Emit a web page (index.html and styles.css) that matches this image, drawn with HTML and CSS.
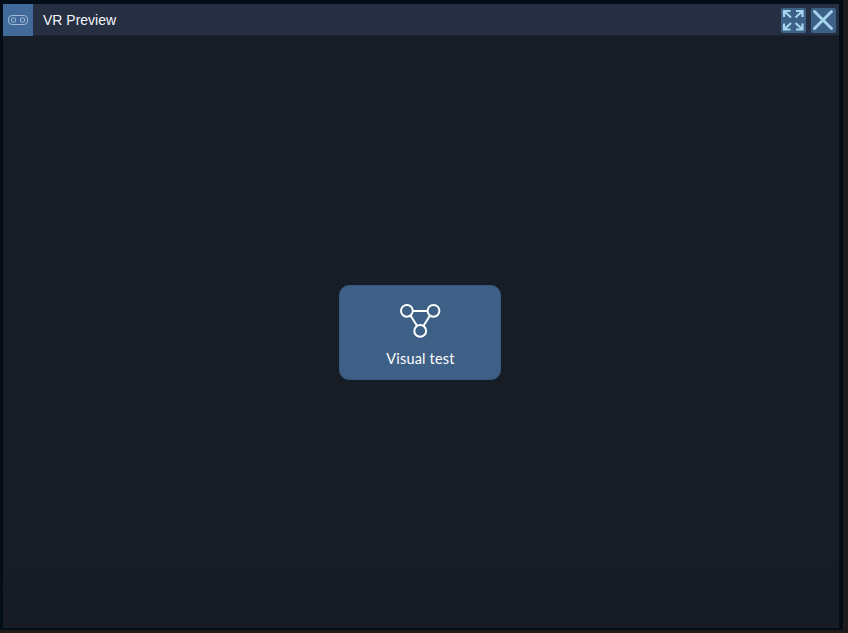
FILE: index.html
```html
<!DOCTYPE html>
<html lang="en">
<head>
<meta charset="utf-8">
<title>VR Preview</title>
<link rel="stylesheet" href="styles.css">
</head>
<body>
<main class="window">
  <header class="titlebar">
    <span class="app-icon">
      <svg width="30" height="32" viewBox="0 0 30 32" fill="none" stroke="#a0bad8">
        <rect x="5.500" y="11.500" width="19" height="9" rx="3.500"/>
        <rect x="8.500" y="14" width="4" height="4" rx="1"/>
        <rect x="17.500" y="14" width="4" height="4" rx="1"/>
      </svg>
    </span>
    <h1 class="title">VR Preview</h1>
    <div class="actions">
      <button class="action" aria-label="Expand">
        <svg width="25" height="25" viewBox="0 0 25 25" fill="none" stroke="#a5d6ee" stroke-width="2.200">
          <path d="M3 9V3h6.500M15 3h6.500v6M21.500 15.500v6H15M9.500 21.500H3v-6M3.500 3.500l6.500 6M21 3.500l-6.500 6M21 21l-6.500-6M3.500 21l6.500-6"/>
        </svg>
      </button>
      <button class="action" aria-label="Close">
        <svg width="25" height="25" viewBox="0 0 25 25" fill="none" stroke="#a5d6ee" stroke-width="2.900" stroke-linecap="round">
          <path d="M3.500 3.500l17 17M20.500 3.500l-17 17"/>
        </svg>
      </button>
    </div>
  </header>
  <section class="preview">
    <button class="card">
      <svg width="42" height="36" viewBox="0 0 42 36" fill="none" stroke="#fff" stroke-width="2">
        <path d="M13.500 9h14.500M11.500 13.500l6.300 10M31 13.500L24.700 23.500"/>
        <circle cx="7.900" cy="8.800" r="5.900"/>
        <circle cx="34.500" cy="8.800" r="5.900"/>
        <circle cx="21.200" cy="28.900" r="5.900"/>
      </svg>
      <span class="label">Visual test</span>
    </button>
  </section>
</main>
</body>
</html>
```
FILE: styles.css
```css
* { box-sizing: border-box; }

body {
  margin: 0;
  height: 633px;
  padding: 0 5px 3px 0;
  overflow: hidden;
  background: #1d1b1b;
}

.window {
  display: flex;
  flex-direction: column;
  height: 630px;
  padding: 4px 4px 2px 3px;
  background: #020d17;
}

.titlebar {
  display: flex;
  flex: none;
  align-items: center;
  height: 32px;
  background: linear-gradient(#262f41 0 31px, #1b2330 31px);
}

.app-icon {
  display: flex;
  width: 30px;
  height: 32px;
  background: #416a9a;
}

.title {
  margin: 0 0 0 10px;
  color: #f3f5f8;
  font: 400 14px/20px "Liberation Sans", Arial, sans-serif;
}

.actions {
  display: flex;
  gap: 5px;
  margin: 1px 3px 0 auto;
}

.action {
  display: flex;
  width: 25px;
  height: 25px;
  padding: 0;
  border: 0;
  border-radius: 2px;
  background: #3e6187;
}

.preview {
  display: flex;
  flex: 1;
  align-items: center;
  justify-content: center;
  padding: 0 2px 0 0;
  background: linear-gradient(#161d26 0 88%, #161b24 100%);
}

.card {
  display: flex;
  flex-direction: column;
  align-items: center;
  width: 162px;
  height: 95px;
  padding: 16px 0 0;
  border: 1px solid #36587c;
  border-radius: 10px;
  background: #3e5f86;
  color: #fff;
}

.label {
  margin: 11px 0 0 1px;
  font: 400 14.5px/20px Lato, sans-serif;
  letter-spacing: 0.18px;
}
```
